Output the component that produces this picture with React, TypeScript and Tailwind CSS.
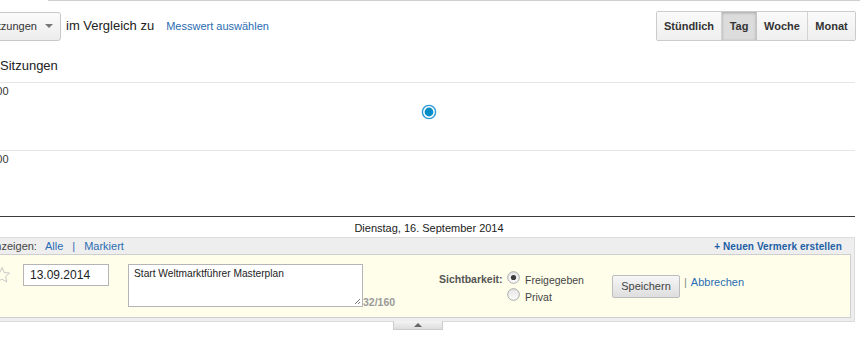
import React from "react";

function Star() {
  return (
    <svg width="18" height="18" viewBox="0 0 18 18">
      <path
        d="M9 1.5 L11.2 6.6 L16.6 7 L12.5 10.6 L13.8 16 L9 13.1 L4.2 16 L5.5 10.6 L1.4 7 L6.8 6.6 Z"
        fill="none"
        stroke="#c8c8c8"
        strokeWidth="1"
        strokeLinejoin="round"
      />
    </svg>
  );
}

function Radio({ checked }: { checked?: boolean }) {
  return (
    <svg width="13" height="13" viewBox="0 0 13 13" className="shrink-0">
      <defs>
        <linearGradient id={checked ? "rg1" : "rg2"} x1="0" y1="0" x2="0" y2="1">
          <stop offset="0" stopColor="#e4e4e4" />
          <stop offset="1" stopColor="#fdfdfd" />
        </linearGradient>
      </defs>
      <circle cx="6.5" cy="6.5" r="5.8" fill={`url(#${checked ? "rg1" : "rg2"})`} stroke="#a9a9a9" strokeWidth="1" />
      {checked && <circle cx="6.5" cy="6.5" r="2.6" fill="#3c3c3c" />}
    </svg>
  );
}

export default function App() {
  return (
    <div
      className="w-[865px] h-[337px] overflow-hidden bg-white text-[#333]"
      style={{ fontFamily: '"Liberation Sans", Arial, sans-serif' }}
    >
      {/* top line */}
      <div className="ml-[48px] w-[812px] h-px bg-[#cfcfcf]" />

      {/* toolbar row */}
      <div className="mt-[10px] w-[856px] h-[30px] flex items-center">
        <div className="ml-[-22px] h-[29px] w-[83px] flex items-center border border-[#c9c9c9] rounded-[3px] bg-gradient-to-b from-[#fbfbfb] to-[#ececec] pl-[9px] pr-[7px]">
          <span className="text-[11px] text-[#333] leading-none">Sitzungen</span>
          <span className="ml-auto w-0 h-0 border-l-[4px] border-r-[4px] border-t-[4px] border-l-transparent border-r-transparent border-t-[#777]" />
        </div>
        <span className="ml-[5px] text-[13px] text-[#222]">im Vergleich zu</span>
        <span className="ml-[12px] text-[11px] text-[#2a6cb3]">Messwert auswählen</span>
        <div className="ml-auto flex h-[30px] border border-[#cbcbcb] rounded-[2px] overflow-hidden text-[11px] font-bold text-[#333]">
          <div className="w-[65px] flex items-center justify-center bg-gradient-to-b from-[#fafafa] to-[#efefef] border-r border-[#d3d3d3]">Stündlich</div>
          <div className="w-[35px] flex items-center justify-center bg-[#dcdcdc] border-r border-[#c4c4c4] shadow-[inset_0_1px_3px_rgba(0,0,0,0.25)]">Tag</div>
          <div className="w-[51px] flex items-center justify-center bg-gradient-to-b from-[#fafafa] to-[#efefef] border-r border-[#d3d3d3]">Woche</div>
          <div className="w-[47px] flex items-center justify-center bg-gradient-to-b from-[#fafafa] to-[#efefef]">Monat</div>
        </div>
      </div>

      {/* metric label */}
      <div className="mt-[17px] text-[13px] leading-[16px] text-[#222]">Sitzungen</div>

      {/* chart */}
      <div className="mt-[8px] w-[855px] relative">
        <div className="h-[68px] border-t border-[#e6e6e6]">
          <div className="ml-[-19px] mt-[2px] text-[11px] leading-[13px] text-[#333]">1.000</div>
        </div>
        <div className="h-[66px] border-t border-[#e6e6e6]">
          <div className="ml-[-19px] mt-[2px] text-[11px] leading-[13px] text-[#333]">1.000</div>
        </div>
        <div className="h-px bg-[#3a3a3a]" />
        <svg width="16" height="16" viewBox="0 0 16 16" className="absolute left-[421px] top-[22px]">
          <circle cx="8" cy="8" r="6.6" fill="#fff" stroke="#2b9ad6" strokeWidth="1.4" />
          <circle cx="8" cy="8" r="4.4" fill="#058dc7" />
        </svg>
      </div>

      {/* date label */}
      <div className="w-[858px] pt-[4px] pb-[2px] text-center text-[11px] leading-[14px] text-[#222]">
        Dienstag, 16. September 2014
      </div>

      {/* annotation panel */}
      <div className="ml-[-20px] w-[875px] bg-[#eeeeee] border border-[#dcdcdc]">
        <div className="h-[16px] flex items-center pl-[7px] pr-[12px] text-[11px]">
          <span className="text-[#444]">Anzeigen:</span>
          <span className="ml-[8px] text-[#2a6cb3]">Alle</span>
          <span className="ml-[9px] text-[#2a6cb3]">|</span>
          <span className="ml-[9px] text-[#2a6cb3]">Markiert</span>
          <span className="ml-auto text-[10px] font-bold text-[#1d5fa5] tracking-[0.1px]">+ Neuen Vermerk erstellen</span>
        </div>
        <div className="mr-[3px] mb-[3px] h-[64px] bg-[#fefeea] border border-[#cfcfcf] flex items-start pt-[9px]">
          <div className="ml-[11px] mt-[2px] w-[18px] h-[18px]">
            <Star />
          </div>
          <div className="ml-[12px] w-[86px] h-[22px] bg-white border border-[#b5b5b5] flex items-center pl-[6px] text-[12px] text-[#222]">
            13.09.2014
          </div>
          <div className="ml-[19px] w-[235px] h-[43px] bg-white border border-[#b5b5b5] relative pl-[5px] pt-[3px] text-[10.2px] leading-[12px] text-[#222]">
            Start Weltmarktführer Masterplan
            <svg width="7" height="7" viewBox="0 0 7 7" className="absolute right-[1px] bottom-[1px]">
              <path d="M6 1 L1 6 M6 4 L4 6" stroke="#777" strokeWidth="1" />
            </svg>
          </div>
          <div className="w-[76px] mt-[32px] text-[10.5px] leading-[12px] font-bold text-[#9a9a9a]">32/160</div>
          <div className="w-[68px] mt-[9px] text-[10.5px] leading-[12px] font-bold text-[#555]">Sichtbarkeit:</div>
          <div className="w-[105px] mt-[7px] flex flex-col text-[10.5px] text-[#444]">
            <div className="h-[17px] flex items-start">
              <Radio checked />
              <span className="ml-[5px] mt-[3px] leading-[12px]">Freigegeben</span>
            </div>
            <div className="h-[17px] flex items-start">
              <Radio />
              <span className="ml-[5px] mt-[3px] leading-[12px]">Privat</span>
            </div>
          </div>
          <div className="mt-[11px] w-[68px] h-[23px] flex items-center justify-center border border-[#bdbdbd] rounded-[2px] bg-gradient-to-b from-[#f6f6f6] to-[#dedede] text-[11px] text-[#444]">
            Speichern
          </div>
          <div className="mt-[11px] ml-[4px] text-[11px] leading-[14px]">
            <span className="text-[#888]">|</span>
            <span className="ml-[4px] text-[#2a6cb3]">Abbrechen</span>
          </div>
        </div>
      </div>

      {/* collapse tab */}
      <div className="ml-[393px] mt-[-1px] w-[50px] h-[9px] border border-t-0 border-[#cccccc] bg-gradient-to-b from-[#f4f4f4] to-[#dddddd] flex items-center justify-center">
        <span className="w-0 h-0 border-l-[4px] border-r-[4px] border-b-[4px] border-l-transparent border-r-transparent border-b-[#666]" />
      </div>
    </div>
  );
}
